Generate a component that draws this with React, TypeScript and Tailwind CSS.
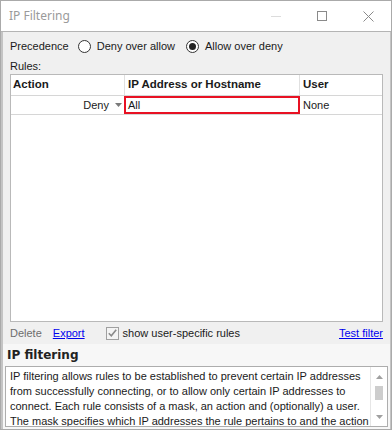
export default function App() {
  const ui = { fontFamily: '"Liberation Sans", Arial, sans-serif' }
  return (
    <div className="w-[392px] h-[430px] overflow-hidden bg-white border border-[#aaaaaa] flex flex-col text-[11px] text-[#1a1a1a]" style={ui}>
      {/* title bar */}
      <div className="h-[31px] shrink-0 flex items-center pl-[8px] border-b border-[#b4b4b4]">
        <span className="text-[12px] text-[#9a9a9a]" style={{ fontFamily: '"Noto Sans", "Open Sans", sans-serif' }}>IP Filtering</span>
        <div className="ml-auto flex items-center">
          <div className="w-[46px] h-[30px] flex items-center justify-center">
            <div className="w-[10px] h-px bg-[#dcdcdc]" />
          </div>
          <div className="w-[46px] h-[30px] flex items-center justify-center">
            <div className="w-[10px] h-[10px] border border-[#8a8a8a]" />
          </div>
          <div className="w-[46px] h-[30px] flex items-center justify-center">
            <svg width="11" height="11" viewBox="0 0 11 11">
              <path d="M0.5 0.5 L10.5 10.5 M10.5 0.5 L0.5 10.5" stroke="#8a8a8a" strokeWidth="1" />
            </svg>
          </div>
        </div>
      </div>

      {/* body */}
      <div className="flex-1 flex flex-col bg-[#f0f0f0] border-l-2 border-r border-[#c4c4c4]">
        <div className="flex items-center h-[28px] pl-[7px]">
          <span>Precedence</span>
          <label className="flex items-center ml-[9px]">
            <span className="w-[13px] h-[13px] rounded-full border border-[#333] bg-white" />
            <span className="ml-[6px]">Deny over allow</span>
          </label>
          <label className="flex items-center ml-[11px]">
            <span className="w-[13px] h-[13px] rounded-full border border-[#333] bg-white flex items-center justify-center">
              <span className="w-[7px] h-[7px] rounded-full bg-[#222]" />
            </span>
            <span className="ml-[6px]">Allow over deny</span>
          </label>
        </div>
        <div className="pl-[7px] h-[13px] leading-[13px]">Rules:</div>

        {/* table */}
        <div className="mx-[7px] mt-[1px] h-[248px] bg-white border border-[#b9b9b9] flex flex-col">
          <div className="flex h-[21px] border-b border-[#d6d6d6] font-bold text-[11.5px]">
            <div className="w-[114px] pl-[2px] flex items-center border-r border-[#e0e0e0]">Action</div>
            <div className="w-[175px] pl-[3px] flex items-center border-r border-[#e0e0e0]">IP Address or Hostname</div>
            <div className="flex-1 pl-[3px] flex items-center">User</div>
          </div>
          <div className="flex h-[19px] border-b border-[#d6d6d6]">
            <div className="w-[114px] flex items-center justify-end pr-[3px]">
              <span>Deny</span>
              <svg width="7" height="4" viewBox="0 0 7 4" className="ml-[6px]">
                <path d="M0 0 L7 0 L3.5 4 Z" fill="#7a7a7a" />
              </svg>
            </div>
            <div className="w-[176px] flex items-center pl-[2px] border-2 border-[#e81123] -ml-[1px]">All</div>
            <div className="flex-1 pl-[3px] flex items-center">None</div>
          </div>
        </div>

        {/* footer links */}
        <div className="flex items-center h-[22px] px-[7px]">
          <span className="text-[#6d6d6d]">Delete</span>
          <a href="#" className="ml-[11px] text-[#0000ee] underline">Export</a>
          <label className="flex items-center ml-[21px]">
            <span className="w-[13px] h-[13px] border border-[#a0a0a0] bg-[#f4f4f4] flex items-center justify-center">
              <svg width="9" height="8" viewBox="0 0 9 8">
                <path d="M0.8 4.2 L3.3 6.8 L8.2 0.8" stroke="#8a8a8a" strokeWidth="1.6" fill="none" />
              </svg>
            </span>
            <span className="ml-[4px]">show user-specific rules</span>
          </label>
          <a href="#" className="ml-auto text-[#0000ee] underline">Test filter</a>
        </div>

        {/* help section */}
        <div className="flex-1 flex flex-col bg-[#f7f7f7]">
          <div className="h-[22px] flex items-center pl-[4px] font-bold text-[12px] text-[#222]" style={{ fontFamily: '"DejaVu Sans", Verdana, sans-serif' }}>IP filtering</div>
          <div className="mx-[2px] h-[61px] bg-white border border-[#adadad] flex">
            <div className="flex-1 pl-[4px] pt-[2px] leading-[15px] overflow-hidden">
              IP filtering allows rules to be established to prevent certain IP addresses from successfully connecting, or to allow only certain IP addresses to connect. Each rule consists of a mask, an action and (optionally) a user. The mask specifies which IP addresses the rule pertains to and the action
            </div>
            <div className="w-[17px] border-l border-[#e6e6e6] bg-white flex flex-col items-center">
              <svg width="7" height="4" viewBox="0 0 7 4" className="mt-[8px]">
                <path d="M0 4 L7 4 L3.5 0 Z" fill="#a0a0a0" />
              </svg>
              <div className="w-[8px] h-[14px] bg-[#cdcdcd] mt-[7px]" />
              <svg width="7" height="4" viewBox="0 0 7 4" className="mt-auto mb-[7px]">
                <path d="M0 0 L7 0 L3.5 4 Z" fill="#a0a0a0" />
              </svg>
            </div>
          </div>
        </div>
      </div>
    </div>
  )
}
